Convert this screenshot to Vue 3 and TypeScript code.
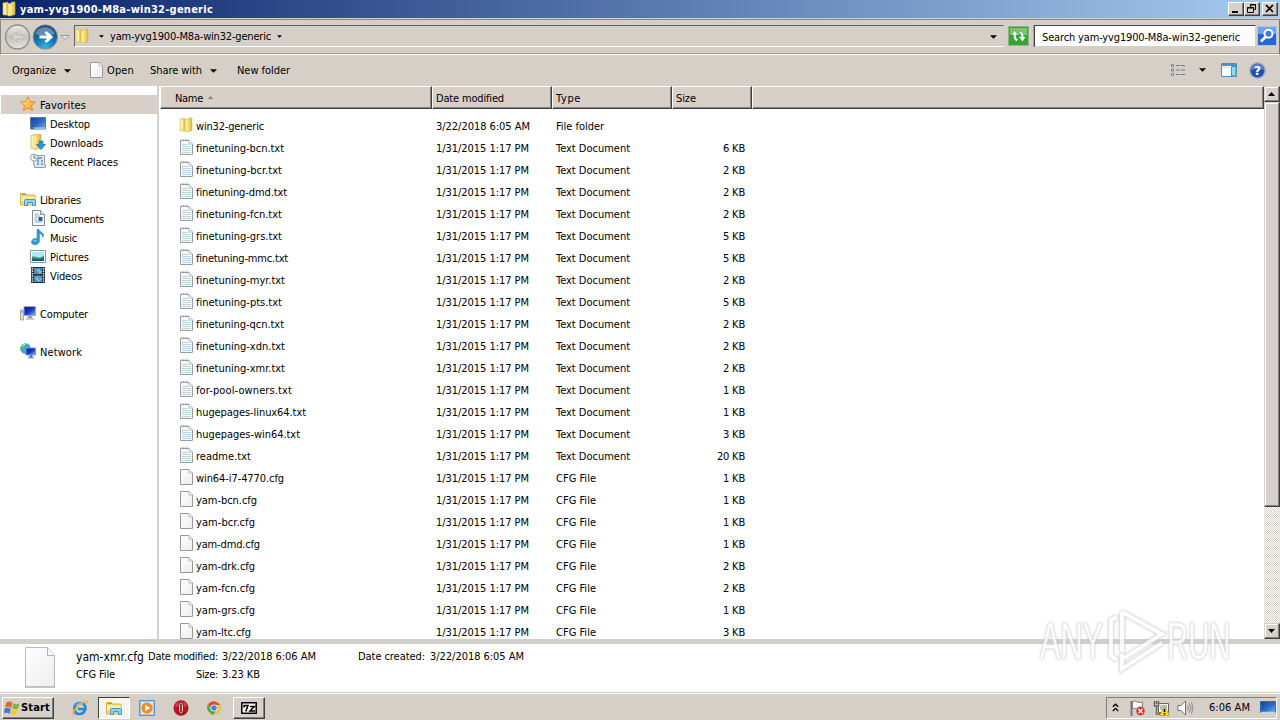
<script setup lang="ts">
import type { Directive } from 'vue'

interface FileRow { name: string; width: number; kind: 'folder' | 'txt' | 'cfg'; size: string }
interface NavRow { label: string; icon: string; width: number; child?: boolean; active?: boolean }

/* Spreads a label over an exact width by adjusting its tracking. */
const vFit: Directive<HTMLElement, number> = {
  mounted(el, { value }) {
    const count = (el.textContent ?? '').length
    const natural = el.getBoundingClientRect().width
    if (count) el.style.letterSpacing = `${(value - natural) / count}px`
  },
}

const nav: (NavRow | null)[] = [
  { label: 'Favorites', icon: 'star', width: 46, active: true },
  { label: 'Desktop', icon: 'desktop', width: 40, child: true },
  { label: 'Downloads', icon: 'downloads', width: 53, child: true },
  { label: 'Recent Places', icon: 'recent', width: 68, child: true },
  null,
  { label: 'Libraries', icon: 'libraries', width: 41 },
  { label: 'Documents', icon: 'documents', width: 54, child: true },
  { label: 'Music', icon: 'music', width: 27, child: true },
  { label: 'Pictures', icon: 'pictures', width: 39, child: true },
  { label: 'Videos', icon: 'videos', width: 32, child: true },
  null,
  { label: 'Computer', icon: 'computer', width: 48 },
  null,
  { label: 'Network', icon: 'network', width: 42 },
]

const txt = (name: string, width: number, kb: number): FileRow => ({ name: name + '.txt', width, kind: 'txt', size: kb + ' KB' })
const cfg = (name: string, width: number, kb: number): FileRow => ({ name: name + '.cfg', width, kind: 'cfg', size: kb + ' KB' })

const files: FileRow[] = [
  { name: 'win32-generic', width: 68, kind: 'folder', size: '' },
  txt('finetuning-bcn', 88, 6), txt('finetuning-bcr', 86, 2), txt('finetuning-dmd', 91, 2),
  txt('finetuning-fcn', 86, 2), txt('finetuning-grs', 86, 5), txt('finetuning-mmc', 92, 5),
  txt('finetuning-myr', 89, 2), txt('finetuning-pts', 86, 5), txt('finetuning-qcn', 88, 2),
  txt('finetuning-xdn', 89, 2), txt('finetuning-xmr', 89, 2), txt('for-pool-owners', 96, 1),
  txt('hugepages-linux64', 110, 1), txt('hugepages-win64', 104, 3), txt('readme', 55, 20),
  cfg('win64-i7-4770', 88, 1), cfg('yam-bcn', 61, 1), cfg('yam-bcr', 59, 1), cfg('yam-dmd', 64, 1),
  cfg('yam-drk', 59, 2), cfg('yam-fcn', 59, 2), cfg('yam-grs', 59, 1), cfg('yam-ltc', 55, 3),
]
const kinds = {
  folder: { label: 'File folder', width: 48 },
  txt: { label: 'Text Document', width: 74 },
  cfg: { label: 'CFG File', width: 40 },
}
</script>

<template>
  <div class="screen">
    <svg class="defs" width="0" height="0" aria-hidden="true">
      <defs>
        <linearGradient id="gFolder" x1="0" x2="1"><stop offset="0" stop-color="#fff0a0" /><stop offset=".5" stop-color="#f6dc70" /><stop offset="1" stop-color="#dcb747" /></linearGradient>
        <linearGradient id="gPage" x1="0" y1="0" x2="1" y2="1"><stop offset="0" stop-color="#fff" /><stop offset="1" stop-color="#ededee" /></linearGradient>
        <linearGradient id="gScreen" x1="0" y1="0" x2="1" y2="1"><stop offset="0" stop-color="#16409a" /><stop offset=".5" stop-color="#2c66c4" /><stop offset="1" stop-color="#72b2f2" /></linearGradient>
        <linearGradient id="gNavy" x1="0" y1="0" x2="1" y2="1"><stop offset="0" stop-color="#0b169a" /><stop offset=".5" stop-color="#1932c8" /><stop offset="1" stop-color="#91b6ff" /></linearGradient>
        <radialGradient id="gForward" cx=".5" cy=".95" r=".9"><stop offset="0" stop-color="#35b9e6" /><stop offset=".5" stop-color="#1674b0" /><stop offset="1" stop-color="#1d4672" /></radialGradient>
        <linearGradient id="gBack" x1="0" y1="0" x2="0" y2="1"><stop offset="0" stop-color="#ece9e6" /><stop offset=".5" stop-color="#c7c3bf" /><stop offset="1" stop-color="#e7e4df" /></linearGradient>
        <linearGradient id="gStar" x1="0" y1="0" x2="1" y2="1"><stop offset="0" stop-color="#fff09a" /><stop offset="1" stop-color="#f49312" /></linearGradient>
      </defs>
      <symbol id="folder" viewBox="0 0 16 16">
        <path d="M1 2 6 1.200v13l-5-.4z" fill="url(#gFolder)" stroke="#dfc565" stroke-width=".6" />
        <path d="M6 2.500h3L9.500 1H13v12.500l-6 1.700-1-1z" fill="url(#gFolder)" stroke="#d5b551" stroke-width=".6" />
        <path d="M6.500 3.500 9.500 2.700V13.300l-3 1.700z" fill="#f7e58e" /><path d="M3 3v10" stroke="#fffbd6" />
      </symbol>
      <symbol id="txt" viewBox="0 0 16 16">
        <path d="M1.500 1.500h8.500l3.500 3.500v10.500h-12z" fill="#f8fbfc" stroke="#969ea2" />
        <path d="M2 .7h8" stroke="#a3a9ac" stroke-dasharray="1 1" /><path d="M10 2v3h3.500" fill="#fff" stroke="#a6adb0" stroke-width=".8" />
        <path d="M3 5.500h6M3 7.500h9M3 9.500h9M3 11.500h9M3 13.500h9" stroke="#bfd2dc" />
      </symbol>
      <symbol id="cfg" viewBox="0 0 16 16">
        <path d="M1.500.5h8.500l3.500 3.500v11.500h-12z" fill="url(#gPage)" stroke="#999" />
        <path d="M10 1v3h3.500" fill="#fff" stroke="#a9a9a9" stroke-width=".8" />
      </symbol>
      <symbol id="star" viewBox="0 0 16 16"><path d="m8 .8 2.200 4.700 5.200.6-3.900 3.500 1.100 5.200L8 12.200l-4.600 2.600 1.100-5.200L.6 6.100l5.200-.6z" fill="url(#gStar)" stroke="#e49032" /></symbol>
      <symbol id="desktop" viewBox="0 0 16 16"><path d="M.5 2.500h15v11.500H.5z" fill="url(#gScreen)" stroke="#4f79b1" /><path d="M1 13.100h14" stroke="#b6d4ea" stroke-width="1.200" /><path d="M1 13.100h3" stroke="#1d4677" stroke-width="1.200" /></symbol>
      <symbol id="downloads" viewBox="0 0 16 16"><path d="M1 1.500 6 .5h5V14l-6 1.500L1 14z" fill="url(#gFolder)" stroke="#cfb156" stroke-width=".7" /><path d="M5 2.500v12M2.500 2v11" stroke="#fff3bb" /><path d="M9 7h4v3.500h2.600L11 15.600 6.400 10.500H9z" fill="#2d95d7" stroke="#1972ae" stroke-width=".7" /></symbol>
      <symbol id="recent" viewBox="0 0 16 16"><path d="M3.500 2.500h11v9h1v3h-11v-3h-1z" fill="#dce8ef" stroke="#8ba1ae" /><path d="M7 5h5M7 8h2m2 0h2M7 11h2m2 0h2" stroke="#648ba8" stroke-width="1.600" /><path d="M8 4v8" stroke="#85a4b8" /><circle cx="4" cy="4.500" r="3.500" fill="#f4f5f1" stroke="#98a5a9" /><path d="M4 2v3h2" stroke="#667780" fill="none" /></symbol>
      <symbol id="libraries" viewBox="0 0 16 16"><path d="M.5 2.500h5l1 1.500H15v10H.5z" fill="#f1da76" stroke="#d3b450" /><path d="M1 5.500h13.500V10H1z" fill="#fff0a4" /><path d="M2 3.500h4" stroke="#72b64c" /><path d="M4.500 14.500V9.700q0-1.200 1.200-1.200h8.600q1.200 0 1.200 1.200v4.800h-3v-3h-5v3z" fill="#90d1f0" stroke="#4298cb" /></symbol>
      <symbol id="documents" viewBox="0 0 16 16"><path d="M2.500.5h8l4 4v11h-12z" fill="#fff" stroke="#7d8993" /><path d="M10.500.5v4h4" fill="#dbe5ed" stroke="#8293a2" /><path d="M4.500 4h4M4.500 6h6M4.500 8h3M4.500 10h3M4.500 12h8" stroke="#83a8c5" /><path d="M8.500 7h4v4h-4z" fill="#285f9f" /></symbol>
      <symbol id="music" viewBox="0 0 16 16"><path d="M7 .5h2c.4 3 7 3.300 3.500 8 .2-2.500-.9-3.300-3.100-4v7.500C9.400 14.500 7 15.700 5 15.700c-2.100 0-3.500-1.100-3.500-2.800 0-2.500 3.100-4.100 5.500-3.200z" fill="#3399d1" stroke="#2c84bd" stroke-width=".6" /><path d="M3 12.500q2-2 4-.8" stroke="#81c9ed" fill="none" /></symbol>
      <symbol id="pictures" viewBox="0 0 16 16"><path d="M.5 2.500h15v12H.5z" fill="#fff" stroke="#8997a1" /><path d="M2 4h12v9H2z" fill="#b7e4f5" /><path d="M2 8.500q4 0 6 1t6-2V13H2z" fill="#338e84" /><path d="M2 11q7 1 12-1v3H2z" fill="#175971" /></symbol>
      <symbol id="videos" viewBox="0 0 16 16"><path d="M1 0h14v16H1z" fill="#26323c" /><path d="M4 1h8v6H4zm0 7.500h8V15H4z" fill="#438cc2" /><path d="M6 3.500 9 1.500l3 4L8 7zM5 12l3-3 4 3-3 3z" fill="#84bedd" /><path d="M8 4v2M9 10v3" stroke="#b37050" stroke-width="1.500" /><path d="M2.500 1v15M13.500 1v15" stroke="#dce6e9" stroke-width="1.400" stroke-dasharray="1.500 1" /></symbol>
      <symbol id="computer" viewBox="0 0 16 16"><path d="M.5 5h3v10h-3z" fill="#d8dfcf" stroke="#889087" stroke-width=".7" /><path d="M1 7h2" stroke="#58b943" /><path d="M4 1.500h11.500v9H4z" fill="url(#gNavy)" stroke="#9da8c9" /><path d="M8 11h4l.8 2.500H7z" fill="#96a0b3" /><path d="M5.500 14h9" stroke="#b3bbc6" stroke-width="1.300" /></symbol>
      <symbol id="network" viewBox="0 0 16 16"><circle cx="5.500" cy="5.600" r="5.300" fill="#35a9dc" /><path d="M3 1q4 0 3 2.500L3 5 1 8Q-1 4 3 1m3 5 4-1-2 5-3 1z" fill="#65b94b" /><path d="M2 3 5 1.300" stroke="#c9f1f9" /><path d="M6 5h9.500v7H6z" fill="url(#gNavy)" stroke="#7b93cc" /><path d="M10 12.500h2v2h-2zM8 14.800h6" fill="#657dac" stroke="#657dac" /></symbol>
      <symbol id="down" viewBox="0 0 8 4"><path d="M0 0h8L4 4z" /></symbol>
    </svg>

    <header class="titlebar">
      <svg class="i16"><use href="#folder" /></svg>
      <span v-fit="193" class="title">yam-yvg1900-M8a-win32-generic</span>
      <div class="caption">
        <b class="winbtn"><svg width="12" height="11"><path d="M2 8h6v2H2z" /></svg></b>
        <b class="winbtn"><svg width="12" height="11"><path d="M4.500 4V1.500h5v5H8M4 2h6M1.500 4.500h6v5h-6zM1 5h7" fill="none" stroke="#000" /></svg></b>
        <b class="winbtn last"><svg width="12" height="11"><path d="m2 2 7 7M9 2 2 9" stroke="#000" stroke-width="1.700" /></svg></b>
      </div>
    </header>

    <section class="address">
      <svg class="travel" width="69" height="28">
        <circle cx="12.500" cy="14" r="12" fill="url(#gBack)" stroke="#908e8b" stroke-width="1.400" />
        <path d="m6 14 6-5v3h7v4h-7v3z" fill="#d5d2cf" stroke="#b9b5b0" />
        <circle cx="40.300" cy="14" r="12.200" fill="url(#gForward)" stroke="#7e97a8" />
        <path d="M30 11q3-7 10-7t10 7q-10 3-20 0" fill="#fff" opacity=".3" />
        <path d="M34.500 14h11m-5-5 5.500 5-5.500 5" fill="none" stroke="#fff" stroke-width="3" />
        <path d="M56 12.500h8l-4 4z" fill="#eee" stroke="#9a9894" />
      </svg>
      <div class="path">
        <svg class="i16"><use href="#folder" /></svg>
        <svg class="tri first"><use href="#down" /></svg>
        <span v-fit="161">yam-yvg1900-M8a-win32-generic</span>
        <svg class="tri second"><use href="#down" /></svg>
        <svg class="arrow end"><use href="#down" /></svg>
      </div>
      <svg class="refresh" width="21" height="20"><path d="M.5.5h20v19H.5z" fill="#37a536" stroke="#96b48b" /><path d="M2 2h17v7H2z" fill="#7ac66f" /><path d="M8.500 15.500Q5 14 5.500 9H3L6.500 4.500 10.500 9H8q-.3 3 2 4.500zM12 5q4 1 3.800 5.500H18L14.500 16l-4-5.500h2.700Q13.300 8 11 6.500z" fill="#f0fff0" stroke="#2f8831" stroke-width=".5" /></svg>
      <div class="search"><span v-fit="198">Search yam-yvg1900-M8a-win32-generic</span></div>
      <svg class="find" width="20" height="20"><path d="M.5.5h19v19H.5z" fill="#2665d3" stroke="#abc5eb" /><path d="M1 1h18v7H1z" fill="#6ba2e9" /><circle cx="11.500" cy="7.800" r="4" fill="#3a7dde" stroke="#fff" stroke-width="2" /><path d="m8.500 11-4.600 4.500" stroke="#fff" stroke-width="2.600" /></svg>
    </section>

    <nav class="commands">
      <span v-fit="44" class="organize">Organize</span><svg class="arrow a1"><use href="#down" /></svg>
      <svg class="i16 open-icon"><use href="#cfg" /></svg><span v-fit="27" class="open">Open</span>
      <span v-fit="52" class="share">Share with</span><svg class="arrow a2"><use href="#down" /></svg>
      <span v-fit="53" class="newfolder">New folder</span>
      <div class="tools">
        <svg width="16" height="14"><path d="M1.500 1.500h2v2h-2zm0 4.500h2v2h-2zm0 4.500h2v2h-2z" fill="#fff" stroke="#777f8c" /><path d="M6 2.500h4m1 0h4m-9 4.500h4m1 0h4m-9 4.500h4m1 0h4" stroke="#6f7990" /></svg>
        <svg class="arrow a3"><use href="#down" /></svg>
        <svg class="pane" width="16" height="14"><path d="M.5.5h15v13H.5z" fill="#fff" stroke="#4c8eb4" /><path d="M1 1h14v2H1z" fill="#4796bd" /><path d="M10.500 3.500H15V13h-4.500z" fill="#94d5eb" stroke="#4c91b0" /><path d="M2 4.500h7" stroke="#d4dce1" /></svg>
        <svg class="help" width="17" height="17"><circle cx="8.500" cy="8.500" r="7.600" fill="#2350b1" stroke="#9da8bb" stroke-width="1.400" /><path d="M2 8q0-6 6.500-6T15 8q-6-2-13 0" fill="#779ade" opacity=".65" /><text x="8.500" y="13" text-anchor="middle" class="q">?</text></svg>
      </div>
    </nav>

    <main class="body">
      <aside class="side">
        <template v-for="(n, i) in nav" :key="i">
          <div v-if="n" class="nav" :class="{ child: n.child, active: n.active }">
            <svg class="i16"><use :href="'#' + n.icon" /></svg><span v-fit="n.width">{{ n.label }}</span>
          </div>
          <div v-else class="nav"></div>
        </template>
      </aside>
      <div class="split"></div>
      <section class="list">
        <div class="head">
          <div class="h name"><span v-fit="28">Name</span><svg width="5" height="3"><path d="M0 3h5L2.500 0z" fill="#85827c" /></svg></div>
          <div class="h date"><span v-fit="68">Date modified</span></div>
          <div class="h type"><span v-fit="25">Type</span></div>
          <div class="h size"><span v-fit="20">Size</span></div>
          <div class="h rest"></div>
        </div>
        <div class="rows">
          <div v-for="f in files" :key="f.name" class="row">
            <svg class="i16"><use :href="'#' + f.kind" /></svg>
            <div class="c-name"><span v-fit="f.width">{{ f.name }}</span></div>
            <div class="c-date"><span v-if="f.kind === 'folder'" v-fit="94">3/22/2018 6:05 AM</span><span v-else v-fit="93">1/31/2015 1:17 PM</span></div>
            <div class="c-type"><span v-fit="kinds[f.kind].width">{{ kinds[f.kind].label }}</span></div>
            <div class="c-size"><span v-if="f.size" v-fit="f.size.length > 4 ? 28 : 22">{{ f.size }}</span></div>
          </div>
        </div>
      </section>
      <div class="scroll">
        <b class="sb"><svg width="8" height="4"><path d="M0 4h7L3.500 0z" /></svg></b>
        <b class="thumb"></b>
        <i></i>
        <b class="sb"><svg width="8" height="4"><path d="M0 0h7L3.500 4z" /></svg></b>
      </div>
    </main>

    <section class="details">
      <svg class="big" width="32" height="41"><path d="M1.500.5h22l7 8v31.500h-29z" fill="url(#gPage)" stroke="#b8b8b8" /><path d="M23.500 1v7.500h7" fill="#fff" stroke="#b3b3b3" /><path d="M1 40h30" fill="none" stroke="#aaa" /></svg>
      <div class="col d1"><span v-fit="68" class="fname">yam-xmr.cfg</span><span v-fit="39">CFG File</span></div>
      <div class="col d2"><span v-fit="70">Date modified:</span><span v-fit="22">Size:</span></div>
      <div class="col d3"><span v-fit="94">3/22/2018 6:06 AM</span><span v-fit="38">3.23 KB</span></div>
      <div class="col d4"><span v-fit="67">Date created:</span></div>
      <div class="col d5"><span v-fit="94">3/22/2018 6:05 AM</span></div>
    </section>

    <footer class="taskbar">
      <div class="start raised">
        <svg width="17" height="16"><path d="M2.500 2.500Q6 .5 8.500 3L7 8Q4.500 6 1 7.500z" fill="#ed6031" /><path d="M9.500 3.200Q12 5 15.500 3.500L14 8.500Q11 10 8 8z" fill="#72b943" /><path d="M.8 8.500Q4 7 6.800 9L5.500 14Q3 12-.5 13.500z" fill="#3c83cb" /><path d="M7.800 9.200Q11 11 13.800 9.600L12.500 14.500Q9.500 16 6.500 14z" fill="#f4c834" /></svg>
        <span v-fit="29">Start</span>
      </div>
      <div class="quick">
        <svg viewBox="0 0 16 16"><path d="M13 10q-1.500 4-5.500 4-5 0-5-5.500T8 3q5.500 0 5.500 6H6" fill="none" stroke="#288bd1" stroke-width="2.700" /><path d="M2 15q-3-1 2-6.500Q9 2 14 1q2 0 .5 3" fill="none" stroke="#eab83a" stroke-width="1.500" /><path d="M4 5.200q3-3.500 7-1" fill="none" stroke="#85ccef" /></svg>
      </div>
      <div class="quick pressed"><svg viewBox="0 0 16 16"><use href="#libraries" /></svg></div>
      <div class="quick"><svg viewBox="0 0 16 16"><path d="M.5.5h15v15H.5z" fill="#a8c9e5" stroke="#5794c9" /><path d="M2 2h12v12H2z" fill="#dbe8ef" /><circle cx="8" cy="8" r="5.600" fill="#f28b20" /><path d="m6.200 4.800 5 3.200-5 3.200z" fill="#fff" /></svg></div>
      <div class="quick"><svg viewBox="0 0 16 16"><ellipse cx="8" cy="8" rx="7.500" ry="7.800" fill="#b91520" /><path d="M2 4q6-5 12 0l-1 3H3z" fill="#e25b58" opacity=".6" /><ellipse cx="8" cy="8" rx="2.700" ry="5.500" fill="#e7e1df" stroke="#8b1018" /><path d="M8 4v8" stroke="#a11a21" stroke-width="1.800" /></svg></div>
      <div class="quick"><svg viewBox="0 0 16 16"><circle cx="8" cy="8" r="7" fill="#e5c74a" /><path d="M2 4.300Q7-2 14.200 5H8L5 9z" fill="#d84c40" /><path d="M1.800 4.500Q-1 10 7 15l3.500-5L5 10z" fill="#43a453" /><circle cx="8" cy="8" r="3.600" fill="#fff" /><circle cx="8" cy="8" r="2.800" fill="#4285d6" /></svg></div>
      <div class="zip raised"><svg width="16" height="12"><path d="M.8.8h14.400v10.400H.8z" fill="#fff" stroke="#000" stroke-width="1.500" /><path d="M2.500 3.500H7L4.800 9.500M3 3v2.500M9 4.500h4.500L9 9h5" fill="none" stroke="#000" stroke-width="1.500" /></svg></div>
      <div class="tray">
        <svg class="chev" width="7" height="9"><path d="m.8 3.800 2.700-2.600 2.700 2.600M.8 8l2.700-2.600L6.200 8" fill="none" stroke="#000" stroke-width="1.300" /></svg>
        <svg class="flag" width="17" height="16"><path d="M2.500 1v15" stroke="#777" stroke-width="2" /><path d="M3.500 1.500q3-1 5 .5 2 1 5 0v7q-3 1-5 0-2-1-5-.5z" fill="#fff" stroke="#7e7e7c" /><circle cx="11.500" cy="11" r="4.500" fill="#d82c2c" stroke="#f5b1a9" stroke-width=".6" /><path d="m9.500 9 4 4m0-4-4 4" stroke="#fff" stroke-width="1.500" /></svg>
        <svg class="net" width="17" height="16"><path d="M5.500 3.500h10v9h-10z" fill="#f8f8f4" stroke="#65655f" /><path d="M7 5h7v5H7z" fill="#b7c1c8" /><path d="M1.500 1v5h4V1M3.500 6v8h5M3.500 1v3" fill="none" stroke="#686862" stroke-width="1.500" /><path d="m11.500 6.500 5 9h-10z" fill="#f9d937" stroke="#b29624" stroke-width=".7" /><path d="M11.500 9v3M11.500 13v1.500" stroke="#000" stroke-width="1.500" /></svg>
        <svg class="vol" width="17" height="16"><path d="M1 5.500h3L8.500 1v14L4 10.500H1z" fill="#fff" stroke="#72706b" /><path d="M10.500 5.500q2 2.500 0 5M12.500 3.500q3 4.500 0 9M14.500 2q3 6 0 12" fill="none" stroke="#8f8d86" /></svg>
        <span v-fit="41" class="clock">6:06 AM</span>
        <svg class="showdesk" width="16" height="13"><path d="M.5.5h15v11H.5z" fill="url(#gScreen)" stroke="#366ba8" /><path d="M1 11.500h14" stroke="#bcd7e9" stroke-width="1.500" /></svg>
      </div>
    </footer>

    <svg class="watermark" width="220" height="90" viewBox="0 0 220 90">
      <g class="wm">
        <text transform="translate(10 59) scale(.6 1)">ANY</text>
        <text transform="translate(137 59) scale(.575 1)">RUN</text>
        <path d="M87 17l-6 3v36l6 4M92 12v40M92 12 132 34 91 60M92 54v15l40-26" class="edge" />
        <path d="M87 17l-6 3v36l6 4M92 12v40M92 12 132 34 91 60M92 54v15l40-26" class="core" />
      </g>
    </svg>
  </div>
</template>

<style>
html, body { margin: 0; overflow: hidden; }
</style>

<style scoped>
.screen { width: 1280px; height: 720px; position: relative; overflow: hidden; display: flex; flex-direction: column; background: #d5cfc8; color: #000; font: 11px/14px "DejaVu Sans Condensed", "DejaVu Sans", sans-serif; font-stretch: condensed; white-space: nowrap; }
.screen * { box-sizing: border-box; }
svg { display: block; flex: none; }
span { display: inline-block; flex: none; }
.defs { position: absolute; }
.i16 { width: 16px; height: 16px; }
.titlebar { height: 18px; flex: none; display: flex; align-items: center; padding-left: 2px; background: linear-gradient(90deg, #0a246a, #a6caf0); color: #fff; }
.title { margin-left: 2px; padding-top: 1px; font-weight: bold; }
.caption { margin-left: auto; display: flex; padding-right: 2px; }
.winbtn { width: 16px; height: 14px; padding: 0 0 0 1px; background: #d6d0c8; border: 1px solid; border-color: #fff #404040 #404040 #fff; box-shadow: inset -1px -1px #808080; }
.last { margin-left: 2px; }
.address { height: 36px; flex: none; display: flex; align-items: flex-start; padding: 5px 2px 0 4px; border: 1px solid; border-color: #8c8983 #77746f #fff #8c8983; margin-top: 1px; box-shadow: inset 0 -1px #a09c96; }
.travel { margin-top: -2px; }
.path { width: 930px; height: 22px; display: flex; align-items: center; border: 1px solid; border-color: #5d6468 #d5cfc8 #fff #5d6468; }
.tri { width: 5px; height: 3px; margin-top: 1px; }
.first { margin-left: 8px; }
.path span { margin-left: 6px; padding-top: 2px; }
.second { margin-left: 6px; }
.arrow { width: 7px; height: 4px; }
.end { margin-left: auto; margin-right: 6px; margin-top: 2px; }
.refresh { margin: 1px 0 0 4px; }
.search { margin-left: 5px; width: 222px; height: 22px; padding: 4px 0 0 7px; background: #fff; border: 1px solid; border-color: #404448 #d5cfc8 #d5cfc8 #404448; box-shadow: -1px 0 #a5a29d; }
.search span { padding-top: 1px; }
.find { margin: 1px 0 0 1px; }
.commands { height: 31px; flex: none; display: flex; align-items: center; padding-left: 12px; }
.a1 { margin-left: 8px; }
.open-icon { margin-left: 18px; margin-top: -1px; }
.open { margin-left: 2px; }
.share { margin-left: 16px; }
.a2 { margin-left: 8px; }
.newfolder { margin-left: 20px; }
.tools { margin-left: auto; display: flex; align-items: center; padding: 0 14px 1px 0; }
.a3 { margin-left: 13px; }
.pane { margin-left: 15px; }
.help { margin-left: 12px; }
.q { font: bold 12px "DejaVu Sans", sans-serif; fill: #fff; }
.body { height: 553px; flex: none; display: flex; }
.side { width: 157px; background: #fff; padding: 9px 0 0 1px; }
.nav { height: 19px; width: 156px; display: flex; align-items: flex-start; padding: 1px 0 0 19px; }
.nav span { margin-left: 4px; padding-top: 3px; }
.nav.child { padding-left: 29px; }
.active { background: #d7cfc8; }
.split { width: 3px; background: #d5d1ca; border-right: 1px solid #fff; }
.list { width: 1104px; background: #fff; display: flex; flex-direction: column; }
.head { height: 23px; flex: none; display: flex; }
.h { display: flex; align-items: center; padding-bottom: 1px; border: 1px solid; border-color: #fff #404040 #404040 #fff; box-shadow: inset -1px -1px #88847d; background: #d7cfc8; padding-left: 3px; gap: 5px; }
.h span { padding-top: 3px; }
.name { width: 272px; padding-left: 14px; }
.date, .type { width: 120px; }
.size { width: 80px; }
.rest { width: 512px; }
.rows { padding-top: 6px; height: 530px; overflow: hidden; }
.row { height: 22px; display: flex; align-items: flex-start; padding: 2px 0 0 19px; }
.row > div { padding-top: 3px; }
.c-name { width: 240px; margin-left: 1px; display: flex; }
.c-date { width: 120px; display: flex; }
.c-type { width: 120px; display: flex; }
.c-size { width: 69px; display: flex; justify-content: flex-end; }
.scroll { width: 16px; display: flex; flex-direction: column; background: repeating-conic-gradient(#fff 0 25%, #d5cfc8 0 50%) 0 0 / 2px 2px; }
.scroll i { flex: 1; }
.sb, .thumb { display: flex; align-items: center; justify-content: center; background: #d6d1ca; border: 1px solid; border-color: #d6d1ca #404040 #404040 #d6d1ca; box-shadow: inset -1px -1px #808080, inset 1px 1px #fff; flex: none; }
.sb { height: 16px; }
.thumb { height: 405px; }
.details { height: 53px; flex: none; display: flex; background: #fff; border-top: 5px solid #d1d0ca; padding: 3px 0 0 24px; }
.col { display: flex; flex-direction: column; gap: 4px; padding-top: 3px; align-items: flex-start; }
.d1 { margin-left: 20px; width: 68px; }
.fname { font-size: 12px; }
.d2 { margin-left: 4px; width: 70px; align-items: flex-end; }
.d3 { margin-left: 4px; width: 94px; }
.d4 { margin-left: 42px; width: 67px; }
.d5 { margin-left: 5px; }
.taskbar { height: 28px; flex: none; display: flex; align-items: center; padding: 2px 2px 0; border-top: 1px solid #d0cfca; box-shadow: inset 0 1px #fff; }
.raised { border: 1px solid; border-color: #fff #404040 #404040 #fff; box-shadow: inset -1px -1px #808080; background: #d6d0c9; height: 22px; display: flex; align-items: center; }
.start { width: 52px; padding-left: 1px; font-weight: bold; margin-right: 10px; }
.quick { width: 32px; height: 22px; margin-right: 1.600px; display: flex; align-items: center; justify-content: center; }
.quick svg { width: 16px; height: 16px; }
.pressed { background: #f7f5f2; border: 1px solid; border-color: #404040 #fff #fff #404040; }
.zip { width: 32px; justify-content: center; margin-left: 1px; }
.tray { margin-left: auto; margin-right: 1px; width: 171px; height: 22px; display: flex; align-items: center; border: 1px solid; border-color: #808080 #fff #fff #808080; padding-left: 5px; }
.flag { margin-left: 10px; }
.net { margin-left: 7px; }
.vol { margin-left: 7px; }
.clock { margin-left: 15px; }
.showdesk { margin-left: 10px; }
.watermark { position: absolute; left: 1030px; top: 600px; }
.wm { opacity: .8; filter: drop-shadow(0 0 1.500px #bbb); }
.wm text { font: 51px "Liberation Sans", Arial, sans-serif; fill: #fff; stroke: #dedede; stroke-width: .600; }
.wm .edge { fill: none; stroke: #dadada; stroke-width: 5; }
.wm .core { fill: none; stroke: #fff; stroke-width: 3.800; }
</style>
